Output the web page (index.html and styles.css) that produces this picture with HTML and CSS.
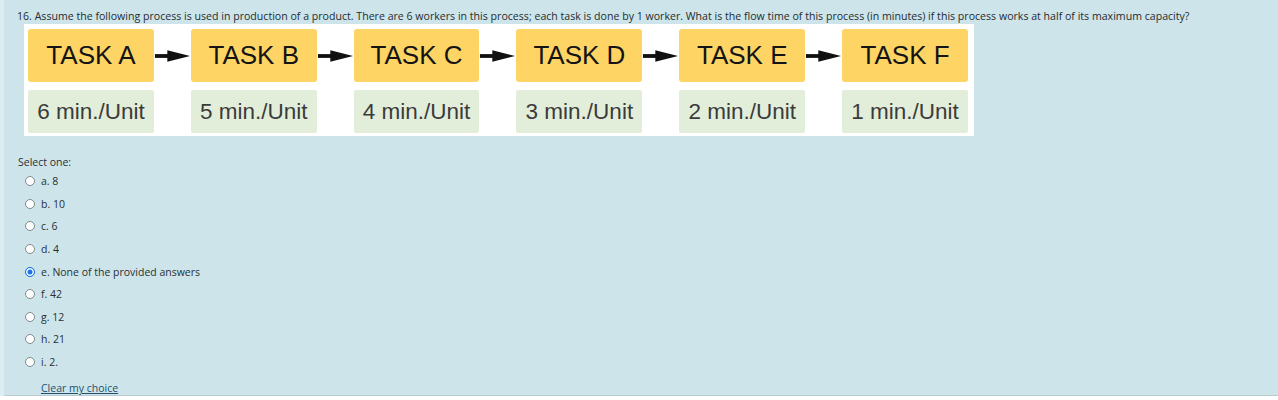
FILE: index.html
```html
<!DOCTYPE html>
<html lang="en">
<head>
<meta charset="utf-8">
<title>Question 16</title>
<link rel="stylesheet" href="styles.css">
</head>
<body>
<div class="page">
  <div class="panel">
    <p class="qtext">16. Assume the following process is used in production of a product. There are 6 workers in this process; each task is done by 1 worker. What is the flow time of this process (in minutes) if this process works at half of its maximum capacity?</p>
    <div class="figure">
      <div class="row tasks">
        <div class="task">TASK A</div>
        <div class="arrow"><svg width="39" height="16" viewBox="0 0 39 16"><rect x="1" y="6" width="18" height="4" fill="#111"/><path d="M14 2 L38 8 L14 14 Z" fill="#111"/></svg></div>
        <div class="task">TASK B</div>
        <div class="arrow"><svg width="39" height="16" viewBox="0 0 39 16"><rect x="1" y="6" width="18" height="4" fill="#111"/><path d="M14 2 L38 8 L14 14 Z" fill="#111"/></svg></div>
        <div class="task">TASK C</div>
        <div class="arrow"><svg width="39" height="16" viewBox="0 0 39 16"><rect x="1" y="6" width="18" height="4" fill="#111"/><path d="M14 2 L38 8 L14 14 Z" fill="#111"/></svg></div>
        <div class="task">TASK D</div>
        <div class="arrow"><svg width="39" height="16" viewBox="0 0 39 16"><rect x="1" y="6" width="18" height="4" fill="#111"/><path d="M14 2 L38 8 L14 14 Z" fill="#111"/></svg></div>
        <div class="task">TASK E</div>
        <div class="arrow"><svg width="39" height="16" viewBox="0 0 39 16"><rect x="1" y="6" width="18" height="4" fill="#111"/><path d="M14 2 L38 8 L14 14 Z" fill="#111"/></svg></div>
        <div class="task">TASK F</div>
      </div>
      <div class="row units">
        <div class="unit">6 min./Unit</div>
        <div class="spacer"></div>
        <div class="unit">5 min./Unit</div>
        <div class="spacer"></div>
        <div class="unit">4 min./Unit</div>
        <div class="spacer"></div>
        <div class="unit">3 min./Unit</div>
        <div class="spacer"></div>
        <div class="unit">2 min./Unit</div>
        <div class="spacer"></div>
        <div class="unit">1 min./Unit</div>
      </div>
    </div>
    <div class="prompt">Select one:</div>
    <div class="answers">
      <label class="opt"><span class="radio"></span><span>a. 8</span></label>
      <label class="opt"><span class="radio"></span><span>b. 10</span></label>
      <label class="opt"><span class="radio"></span><span>c. 6</span></label>
      <label class="opt"><span class="radio"></span><span>d. 4</span></label>
      <label class="opt"><span class="radio checked"></span><span>e. None of the provided answers</span></label>
      <label class="opt"><span class="radio"></span><span>f. 42</span></label>
      <label class="opt"><span class="radio"></span><span>g. 12</span></label>
      <label class="opt"><span class="radio"></span><span>h. 21</span></label>
      <label class="opt"><span class="radio"></span><span>i. 2.</span></label>
    </div>
    <a class="clear" href="#">Clear my choice</a>
  </div>
</div>
</body>
</html>
```

FILE: styles.css
```css
html, body {
  margin: 0;
  padding: 0;
  background: #ffffff;
}

.page {
  background: #dbedf0;
  padding-left: 4px;
}

.panel {
  box-sizing: border-box;
  height: 396px;
  overflow: hidden;
  background: #cde5ea;
  border-bottom: 1px solid #b9cbce;
  padding: 9px 0 0 13px;
  font-family: "Open Sans", "Noto Sans", sans-serif;
  font-size: 11px;
  color: #1d2125;
}

.qtext {
  margin: 0;
  line-height: 15px;
  font-size: 10.6px;
  color: #262b2f;
  white-space: nowrap;
}

.figure {
  margin-left: 7px;
  width: 950px;
  box-sizing: border-box;
  background: #ffffff;
  padding: 5px 6px 3px 4px;
  display: flex;
  flex-direction: column;
  gap: 8px;
}

.row {
  display: flex;
  align-items: center;
}

.task {
  width: 126px;
  height: 53px;
  background: #fed465;
  border-radius: 3px;
  display: flex;
  align-items: center;
  justify-content: center;
  font-family: "Liberation Sans", Arial, sans-serif;
  font-size: 26px;
  color: #141414;
}

.arrow {
  width: 37px;
  display: flex;
  justify-content: center;
}

.arrow svg {
  display: block;
}

.spacer {
  width: 37px;
}

.unit {
  width: 126px;
  height: 43px;
  background: #e2eed9;
  border-radius: 2px;
  display: flex;
  align-items: center;
  justify-content: center;
  font-family: "Liberation Sans", Arial, sans-serif;
  font-size: 22.5px;
  color: #3b3b3b;
}

.prompt {
  margin-top: 19px;
  margin-left: 1px;
  line-height: 15px;
  font-size: 10.5px;
  color: #2a2f33;
}

.answers {
  display: flex;
  flex-direction: column;
}

.opt {
  height: 22.6px;
  display: flex;
  align-items: center;
  gap: 6px;
  padding-left: 8px;
  font-size: 10.5px;
  color: #2a2f33;
}

.radio {
  box-sizing: border-box;
  width: 10px;
  height: 10px;
  border-radius: 50%;
  border: 1px solid #7f8a8e;
  background: #ffffff;
}

.radio.checked {
  border: 1.5px solid #1a73e8;
  background: #1a73e8;
  box-shadow: inset 0 0 0 1.5px #ffffff;
}

.clear {
  display: inline-block;
  margin-top: 8px;
  margin-left: 24px;
  line-height: 15px;
  font-size: 10.5px;
  color: #23506e;
  text-decoration: underline;
}
```
